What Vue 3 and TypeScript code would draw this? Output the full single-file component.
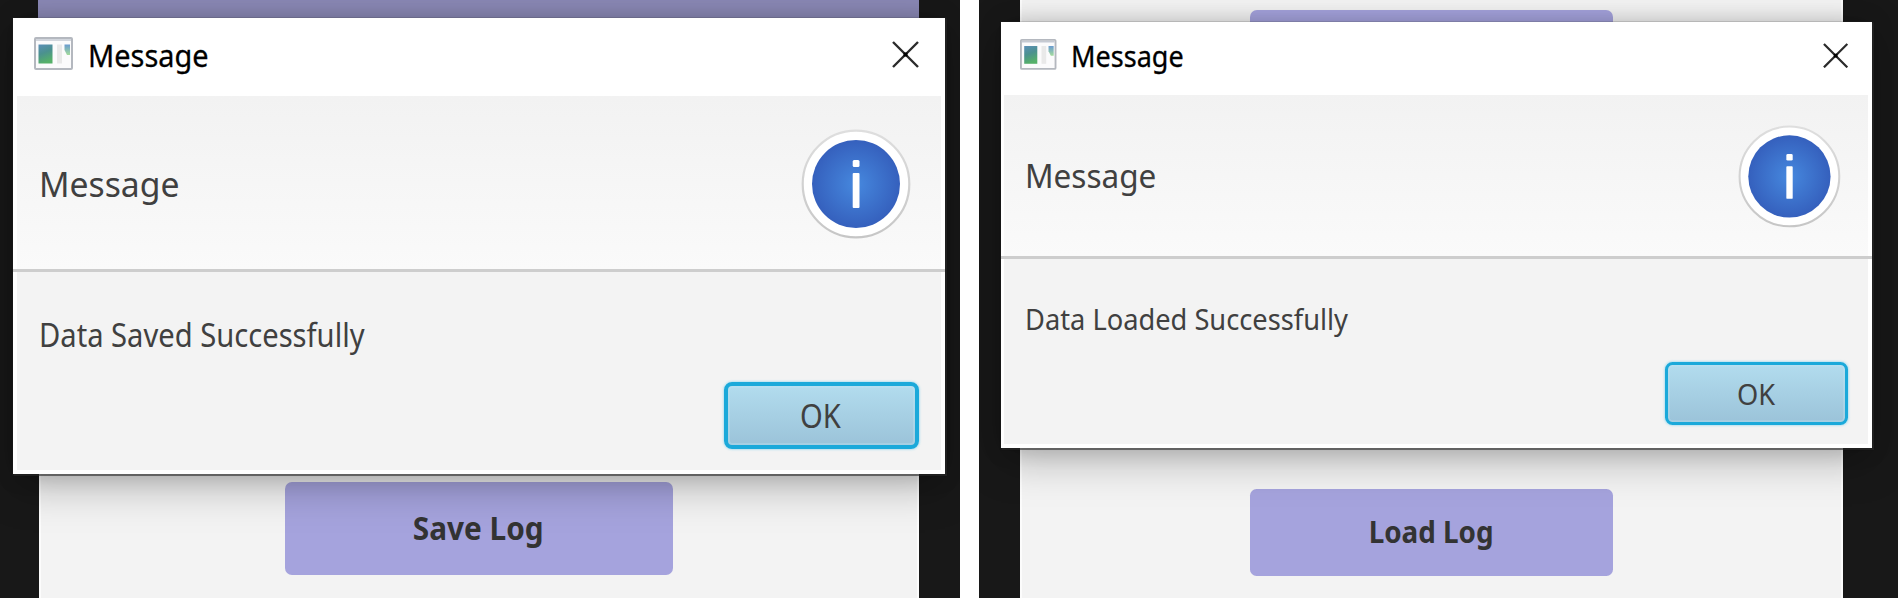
<script setup lang="ts">
interface Scene {
  id: string
  body: string
  action: string
}

const scenes: Scene[] = [
  { id: 'save', body: 'Data Saved Successfully', action: 'Save Log' },
  { id: 'load', body: 'Data Loaded Successfully', action: 'Load Log' },
]
</script>

<template>
  <main class="page">
    <section v-for="scene in scenes" :key="scene.id" class="scene" :class="scene.id">
      <div class="window">
        <div class="upper"></div>
        <button class="action"><span class="fit">{{ scene.action }}</span></button>
      </div>

      <div class="dialog" role="dialog">
        <header class="titlebar">
          <svg class="app-icon" viewBox="0 0 39 33">
            <defs>
              <linearGradient :id="scene.id + '-pane'" x1="0" y1="0" x2="0.3" y2="1">
                <stop offset="0" stop-color="#5b8fb8" />
                <stop offset="0.5" stop-color="#4b918f" />
                <stop offset="1" stop-color="#55b069" />
              </linearGradient>
              <linearGradient :id="scene.id + '-side'" x1="0" y1="0" x2="0" y2="1">
                <stop offset="0" stop-color="#6a9bd0" />
                <stop offset="1" stop-color="#a4dc9c" />
              </linearGradient>
            </defs>
            <rect x="1" y="1" width="37" height="31" rx="1" fill="#fbfbfc" stroke="#b4b8bf" stroke-width="2" />
            <path d="M2 3H37" stroke="#c5cad3" stroke-width="1.5" />
            <rect x="4.5" y="7.5" width="14" height="19" :fill="`url(#${scene.id}-pane)`" />
            <rect x="23" y="7.5" width="5" height="19" fill="#e9e9e9" />
            <path d="M30.5 7.5H36V18H33L30.5 13Z" :fill="`url(#${scene.id}-side)`" />
          </svg>
          <span class="title fit">Message</span>
          <svg class="close" viewBox="0 0 27 27">
            <path d="M1 1L26 26M26 1L1 26" stroke="#2b2b2b" stroke-width="2.4" fill="none" />
            <rect x="11.5" y="11.5" width="4" height="4" fill="#000" />
          </svg>
        </header>

        <div class="heading">
          <span class="fit">Message</span>
          <svg class="info" viewBox="0 0 110 110">
            <defs>
              <radialGradient :id="scene.id + '-blue'">
                <stop offset="0" stop-color="#4688de" />
                <stop offset="1" stop-color="#3560bd" />
              </radialGradient>
              <linearGradient :id="scene.id + '-ring'" x1="0" y1="0" x2="0" y2="1">
                <stop offset="0" stop-color="#dedede" />
                <stop offset="1" stop-color="#c6c6c6" />
              </linearGradient>
            </defs>
            <circle cx="55" cy="55" r="53.3" fill="#fff" :stroke="`url(#${scene.id}-ring)`" stroke-width="2.2" />
            <circle cx="55" cy="55" r="44" :fill="`url(#${scene.id}-blue)`" />
            <rect x="51.7" y="31" width="6.8" height="7" rx="1.5" fill="#fff" />
            <rect x="51.7" y="44" width="6.8" height="35" rx="1" fill="#fff" />
          </svg>
        </div>

        <div class="body">
          <p class="message fit">{{ scene.body }}</p>
          <button class="ok"><span class="fit">OK</span></button>
        </div>
      </div>
    </section>
  </main>
</template>

<style>
body {
  margin: 0;
  background: #fff;
  overflow: hidden;
}
</style>

<style scoped>
.page {
  display: flex;
  gap: 19px;
  width: 1898px;
  height: 598px;
  font-family: 'Noto Sans', 'Open Sans', sans-serif;
}

.scene {
  position: relative;
  box-sizing: border-box;
  flex: none;
  display: flex;
  height: 598px;
  overflow: hidden;
  background: #181818;
}

.save {
  --u: 1px;
  width: 960px;
  padding-left: 39px;
}

.load {
  --u: 0.9352px;
  width: 919px;
  padding-left: 41px;
}

button {
  box-sizing: border-box;
  display: flex;
  justify-content: center;
  align-items: center;
  margin: 0;
  padding: 0;
  border: 0;
  font-family: inherit;
}

.fit {
  display: block;
  white-space: nowrap;
  transform-origin: left center;
}

.window {
  box-sizing: border-box;
  flex: none;
  display: flex;
  flex-direction: column;
  align-items: center;
  width: calc(var(--u) * 880);
  background: #f3f3f3;
  box-shadow: inset 2px 0 #fcfcfc, inset -2px 0 #fcfcfc;
}

.save .window {
  padding-right: 1px;
}

.upper {
  background: #a5a3dd;
  flex: none;
}

.save .upper {
  width: 881px;
  height: 60px;
  margin-bottom: 421.5px;
  background: #8b89b6;
}

.load .upper {
  width: 362.5px;
  height: 87px;
  margin: 9.5px 0 392.5px;
  border-radius: 7px;
}

.action {
  flex: none;
  width: calc(var(--u) * 388);
  height: calc(var(--u) * 93);
  padding-bottom: calc(var(--u) * 2);
  border-radius: calc(var(--u) * 7);
  background: #a5a3dd;
  color: #333;
  font-size: calc(var(--u) * 31.5);
  font-weight: 700;
}

.action .fit {
  transform-origin: center;
  transform: scaleX(0.945);
}

.dialog {
  position: absolute;
  box-sizing: border-box;
  display: flex;
  flex-direction: column;
  width: calc(var(--u) * 932);
  height: calc(var(--u) * 456);
  padding-bottom: calc(var(--u) * 4);
  background: #fff;
  box-shadow: 0 0 1px 1.5px rgba(40, 40, 40, 0.6), 0 0 22px rgba(0, 0, 0, 0.16),
    0 13px 40px rgba(0, 0, 0, 0.26);
}

.save .dialog {
  left: 12.5px;
  top: 18px;
}

.load .dialog {
  left: 21.5px;
  top: 21.7px;
}

.titlebar {
  box-sizing: border-box;
  flex: none;
  display: flex;
  align-items: center;
  height: calc(var(--u) * 78);
  padding: 0 calc(var(--u) * 25.5) calc(var(--u) * 5) calc(var(--u) * 21.3);
}

.app-icon {
  flex: none;
  width: calc(var(--u) * 39);
  height: calc(var(--u) * 33);
  margin-bottom: calc(var(--u) * 2);
}

.title {
  margin-left: calc(var(--u) * 15);
  font-size: calc(var(--u) * 31.5);
  color: #000;
  -webkit-text-stroke: 0.3px #000;
  transform: scaleX(0.918);
}

.close {
  width: calc(var(--u) * 27);
  height: calc(var(--u) * 27);
  margin-left: auto;
}

.heading {
  box-sizing: border-box;
  flex: none;
  display: flex;
  align-items: center;
  justify-content: space-between;
  height: calc(var(--u) * 173);
  margin: 0 calc(var(--u) * 4);
  padding: calc(var(--u) * 3) calc(var(--u) * 29.3) 0 calc(var(--u) * 22);
  background: linear-gradient(#f2f2f2, #fafafa);
  color: #404040;
  font-size: calc(var(--u) * 35);
}

.heading .fit {
  margin-bottom: calc(var(--u) * 2);
  transform: scaleX(0.963);
}

.info {
  width: calc(var(--u) * 110);
  height: calc(var(--u) * 110);
}

.body {
  box-sizing: border-box;
  flex: 1;
  display: flex;
  flex-direction: column;
  justify-content: space-between;
  position: relative;
  margin: 0 calc(var(--u) * 4);
  padding: calc(var(--u) * 44) calc(var(--u) * 21.5) calc(var(--u) * 21) calc(var(--u) * 22);
  background: #f3f3f3;
  color: #404040;
  font-size: calc(var(--u) * 32);
}

.body::before {
  content: '';
  position: absolute;
  top: 0;
  left: calc(var(--u) * -4);
  right: calc(var(--u) * -4);
  height: calc(var(--u) * 2.5);
  background: #cdcdcd;
}

.message {
  margin: 0;
  line-height: calc(var(--u) * 44);
  transform: scaleX(0.911);
}

.ok {
  align-self: flex-end;
  width: calc(var(--u) * 195.5);
  height: calc(var(--u) * 67);
  border: calc(var(--u) * 4) solid #1ba9da;
  border-radius: calc(var(--u) * 8);
  background: linear-gradient(#b2dcee, #9bc3d9);
  box-shadow: 0 0 2px 1px rgba(160, 220, 240, 0.7),
    inset 0 0 0 calc(var(--u) * 2) rgba(190, 228, 243, 0.35);
  color: #404040;
  font-size: calc(var(--u) * 32);
}

.ok .fit {
  transform-origin: center;
  transform: translateX(-1px) scaleX(0.91);
}
</style>
